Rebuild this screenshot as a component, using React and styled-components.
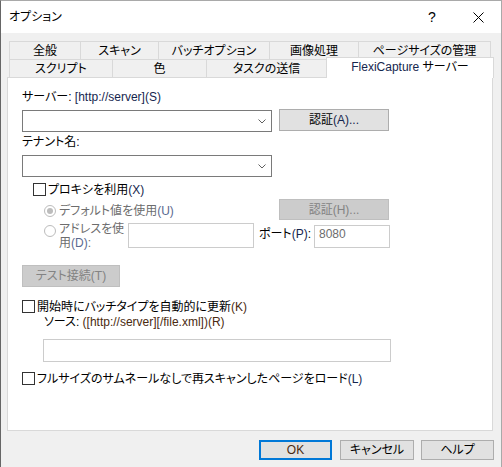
import React from "react";
import styled, { createGlobalStyle } from "styled-components";

const GlobalStyle = createGlobalStyle`
  html, body {
    margin: 0;
    padding: 0;
    background: #f0f0f0;
  }

  body {
    font-family: "Segoe UI", "Liberation Sans", "Noto Sans CJK JP", sans-serif;
    font-size: 12px;
    line-height: 16px;
    color: #000;
    font-feature-settings: "palt";
  }

  * {
    box-sizing: border-box;
  }
`;

const topTabs = [
  { label: "全般", width: 72 },
  { label: "スキャン", width: 79 },
  { label: "バッチオプション", width: 112 },
  { label: "画像処理", width: 90 },
  { label: "ページサイズの管理", width: 133 },
];

const bottomTabs = [
  { label: "スクリプト", width: 104 },
  { label: "色", width: 95 },
  { label: "タスクの送信", width: 121 },
  { label: "FlexiCapture サーバー", width: 168, active: true },
];

const Chevron = () => (
  <svg width="8" height="5" viewBox="0 0 8 5">
    <polyline points="0.5,0.5 4,4 7.5,0.5" fill="none" stroke="#606060" strokeWidth="1" />
  </svg>
);

const CloseIcon = () => (
  <svg width="11" height="11" viewBox="0 0 11 11">
    <line x1="0.5" y1="0.5" x2="10.5" y2="10.5" stroke="#000" strokeWidth="1" />
    <line x1="10.5" y1="0.5" x2="0.5" y2="10.5" stroke="#000" strokeWidth="1" />
  </svg>
);

const App = () => {
  return (
    <>
      <GlobalStyle />
      <Window>
        <TitleBar>
          <TitleText>オプション</TitleText>
          <CaptionButtons>
            <CaptionButton>
              <HelpGlyph>?</HelpGlyph>
            </CaptionButton>
            <CaptionButton>
              <CloseIcon />
            </CaptionButton>
          </CaptionButtons>
        </TitleBar>

        <Body>
          <TabStrip>
            <TabRow>
              {topTabs.map((t) => (
                <Tab key={t.label} $width={t.width}>
                  {t.label}
                </Tab>
              ))}
            </TabRow>
            <TabRow>
              {bottomTabs.map((t) => (
                <Tab key={t.label} $width={t.width} $active={t.active}>
                  {t.active ? (
                    <>
                      <Latin $tint="blue">FlexiCapture</Latin>&nbsp;サーバー
                    </>
                  ) : (
                    t.label
                  )}
                </Tab>
              ))}
            </TabRow>
          </TabStrip>

          <Panel>
            <FieldLabel $top={11}>
              サーバー: <Latin $tint="blue">[http://server](S)</Latin>
            </FieldLabel>
            <FieldRow $top={4} $height={23}>
              <ComboBox $top={1}>
                <Chevron />
              </ComboBox>
              <PushButton $width={110} $height={22} $left={7}>
                認証<Latin $tint="blue">(A)...</Latin>
              </PushButton>
            </FieldRow>

            <FieldLabel $top={2}>テナント名:</FieldLabel>
            <FieldRow $top={5} $height={22}>
              <ComboBox>
                <Chevron />
              </ComboBox>
            </FieldRow>

            <CheckRow $top={6} $left={11}>
              <CheckBox />
              <span>
                プロキシを利用<Latin $tint="blue">(X)</Latin>
              </span>
            </CheckRow>

            <FieldRow $top={3} $height={21}>
              <RadioOption>
                <Radio $checked />
                <DisabledText>
                  デフォルト値を使用<Latin $tint="blue">(U)</Latin>
                </DisabledText>
              </RadioOption>
              <PushButton $width={110} $height={21} $disabled>
                認証(H)...
              </PushButton>
            </FieldRow>

            <FieldRow $top={2} $height={28}>
              <Radio $top={3} />
              <AddressLabel>
                アドレスを使
                <br />
                用<Latin $tint="blue">(D)</Latin>:
              </AddressLabel>
              <TextBox $width={126} $height={25} $top={1} />
              <PortLabel>
                ポート<Latin $tint="blue">(P)</Latin>:
              </PortLabel>
              <TextBox $width={76} $height={23} $top={3}>
                8080
              </TextBox>
            </FieldRow>

            <FieldRow $top={15} $height={22}>
              <PushButton $width={98} $height={22} $disabled>
                テスト接続(T)
              </PushButton>
            </FieldRow>

            <CheckRow $top={13}>
              <CheckBox />
              <span>
                開始時にバッチタイプを自動的に更新<Latin $tint="orange">(K)</Latin>
              </span>
            </CheckRow>

            <FieldLabel $top={1} $left={22}>
              ソース: <Latin $tint="orange">([http://server][/file.xml])(R)</Latin>
            </FieldLabel>
            <FieldRow $top={9} $height={23}>
              <TextBox $width={348} $height={23} $left={21} />
            </FieldRow>

            <CheckRow $top={10}>
              <CheckBox />
              <span>
                フルサイズのサムネールなしで再スキャンしたページをロード
                <Latin $tint="blue">(L)</Latin>
              </span>
            </CheckRow>
          </Panel>

          <Footer>
            <PushButton $width={73} $height={20} $default>
              <Latin $tint="orange">OK</Latin>
            </PushButton>
            <PushButton $width={74} $height={20} $left={8}>
              キャンセル
            </PushButton>
            <PushButton $width={73} $height={20} $left={7}>
              ヘルプ
            </PushButton>
          </Footer>
        </Body>
      </Window>
    </>
  );
};

export default App;

const Window = styled.div`
  width: 502px;
  height: 467px;
  border-top: 1px solid #a9a9a9;
  border-left: 1px solid #666;
  border-right: 1px solid #a9a9a9;
  background: #f0f0f0;
  overflow: hidden;
`;

const TitleBar = styled.div`
  display: flex;
  align-items: center;
  justify-content: space-between;
  height: 32px;
  padding-left: 8px;
  background: #fff;
`;

const TitleText = styled.span`
  font-size: 12px;
`;

const CaptionButtons = styled.div`
  display: flex;
  height: 100%;
`;

const CaptionButton = styled.div`
  display: flex;
  align-items: center;
  justify-content: center;
  width: 46px;
  height: 100%;
`;

const HelpGlyph = styled.span`
  font-family: "Liberation Sans", sans-serif;
  font-size: 14px;
  line-height: 14px;
`;

const Body = styled.div`
  padding: 8px 7px 0 6px;
`;

const TabStrip = styled.div`
  margin-left: 3px;
`;

const TabRow = styled.div`
  display: flex;
  height: 18px;
`;

const Tab = styled.div`
  display: flex;
  align-items: center;
  justify-content: center;
  flex: none;
  width: ${(p) => p.$width}px;
  height: ${(p) => (p.$active ? 21 : 18)}px;
  margin-left: -1px;
  margin-top: ${(p) => (p.$active ? -2 : 0)}px;
  padding-bottom: ${(p) => (p.$active ? 3 : 0)}px;
  border: 1px solid #d9d9d9;
  border-bottom: none;
  background: ${(p) => (p.$active ? "#fff" : "#f0f0f0")};
  white-space: nowrap;
  position: ${(p) => (p.$active ? "relative" : "static")};
  z-index: ${(p) => (p.$active ? 1 : "auto")};
`;

const Panel = styled.div`
  width: 486px;
  height: 354px;
  padding-left: 14px;
  border: 1px solid #d9d9d9;
  background: #fff;
  display: flex;
  flex-direction: column;
`;

const Latin = styled.span`
  color: ${(p) => (p.$tint === "orange" ? "#4a2a10" : "#16264e")};
`;

const FieldLabel = styled.div`
  height: 16px;
  margin-top: ${(p) => p.$top || 0}px;
  margin-left: ${(p) => p.$left || 0}px;
  white-space: nowrap;
`;

const FieldRow = styled.div`
  display: flex;
  align-items: flex-start;
  height: ${(p) => p.$height}px;
  margin-top: ${(p) => p.$top || 0}px;
`;

const ComboBox = styled.div`
  display: flex;
  align-items: center;
  justify-content: flex-end;
  width: 250px;
  height: 22px;
  margin-top: ${(p) => p.$top || 0}px;
  padding-right: 5px;
  border: 1px solid #7a7a7a;
  background: #fff;
`;

const PushButton = styled.div`
  display: flex;
  align-items: center;
  justify-content: center;
  flex: none;
  width: ${(p) => p.$width}px;
  height: ${(p) => p.$height}px;
  margin-left: ${(p) => p.$left || 0}px;
  border: ${(p) =>
    p.$default ? "2px solid #0078d7" : `1px solid ${p.$disabled ? "#bfbfbf" : "#adadad"}`};
  background: ${(p) => (p.$disabled ? "#cccccc" : "#e1e1e1")};
  color: ${(p) => (p.$disabled ? "#838383" : "#000")};
  white-space: nowrap;
`;

const CheckRow = styled.div`
  display: flex;
  align-items: center;
  gap: 2px;
  height: 13px;
  margin-top: ${(p) => p.$top || 0}px;
  margin-left: ${(p) => p.$left || 0}px;
  white-space: nowrap;
`;

const CheckBox = styled.span`
  flex: none;
  width: 13px;
  height: 13px;
  border: 1px solid #333;
  background: #fff;
`;

const RadioOption = styled.div`
  display: flex;
  align-items: center;
  width: 257px;
  height: 14px;
  margin-top: 5px;
`;

const Radio = styled.span`
  flex: none;
  display: flex;
  align-items: center;
  justify-content: center;
  width: 12px;
  height: 12px;
  margin-left: 22px;
  margin-top: ${(p) => p.$top || 0}px;
  border: 1px solid #bcbcbc;
  border-radius: 50%;
  background: #fff;

  &::after {
    content: "";
    display: ${(p) => (p.$checked ? "block" : "none")};
    width: 6px;
    height: 6px;
    border-radius: 50%;
    background: #bcbcbc;
  }
`;

const DisabledText = styled.span`
  margin-left: 3px;
  color: #6d6d6d;
  white-space: nowrap;

  ${Latin} {
    color: #5a6a90;
  }
`;

const AddressLabel = styled(DisabledText)`
  flex: none;
  width: 69px;
  line-height: 14px;
`;

const TextBox = styled.div`
  flex: none;
  width: ${(p) => p.$width}px;
  height: ${(p) => p.$height}px;
  margin-top: ${(p) => p.$top || 0}px;
  margin-left: ${(p) => p.$left || 0}px;
  padding: 0 4px;
  border: 1px solid #cccccc;
  background: #fff;
  color: #6d6d6d;
  font-family: "Liberation Sans", sans-serif;
`;

const PortLabel = styled.span`
  flex: none;
  width: 55px;
  margin-left: 5px;
  margin-top: 5px;
  line-height: 14px;
  white-space: nowrap;
`;

const Footer = styled.div`
  display: flex;
  justify-content: flex-end;
  margin-top: 9px;
`;
